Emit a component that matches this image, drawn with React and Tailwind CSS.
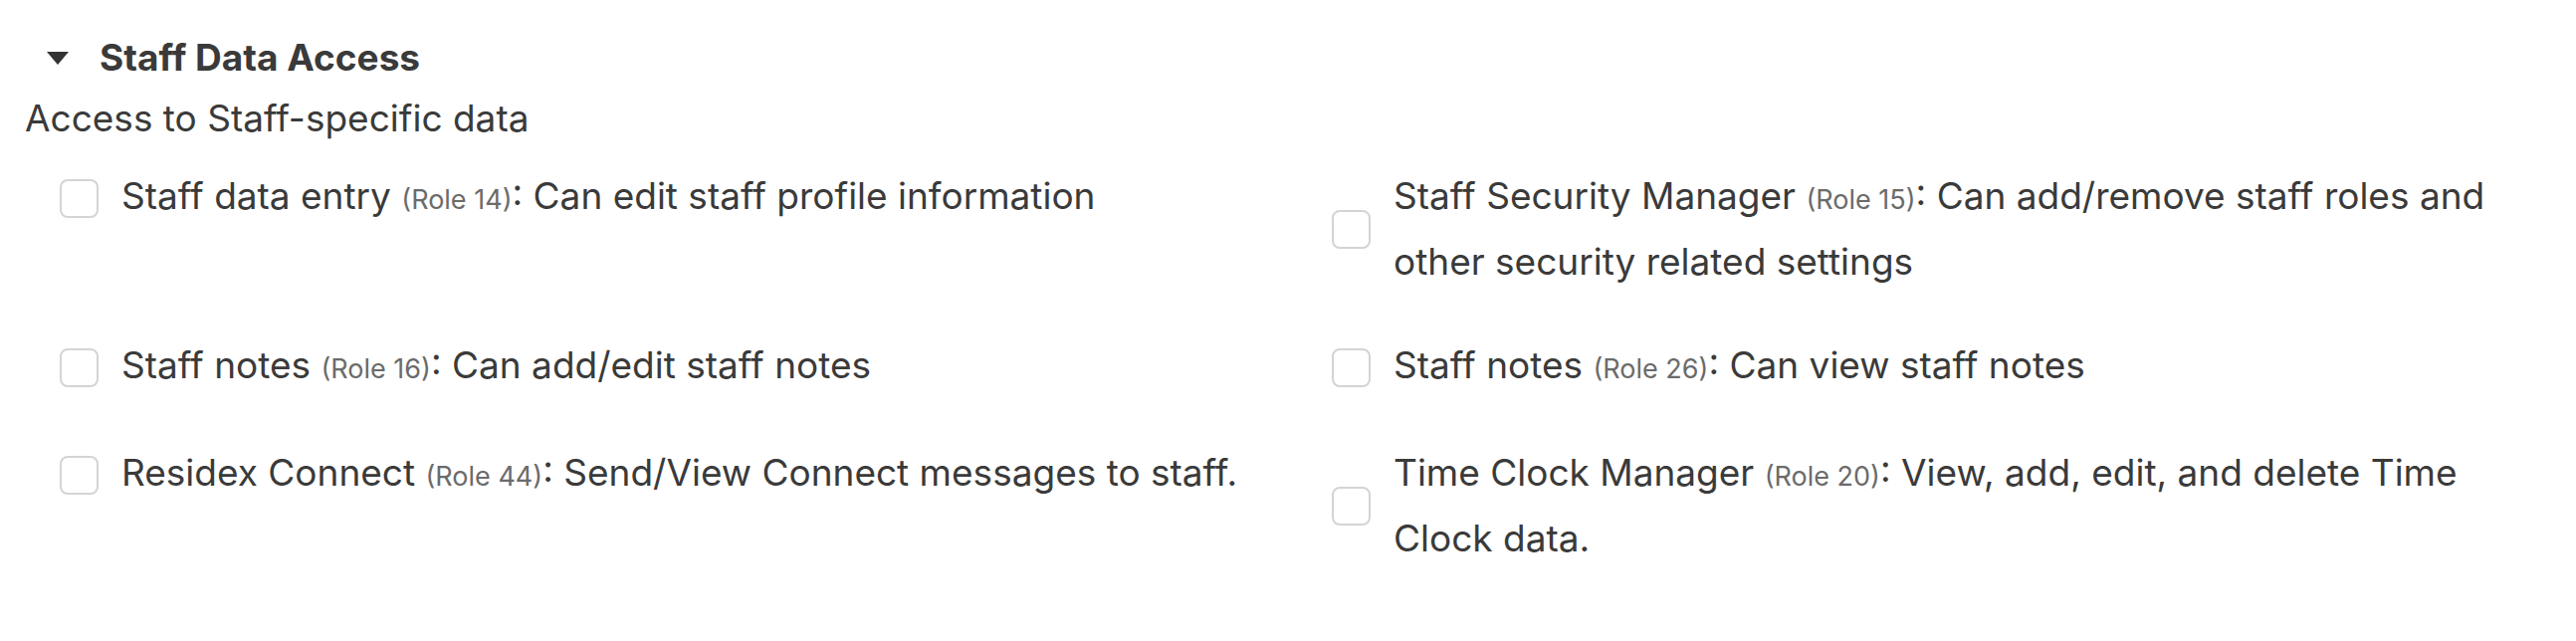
import React from "react";

const roles = [
  { name: "Staff data entry", role: 14, desc: "Can edit staff profile information" },
  { name: "Staff Security Manager", role: 15, desc: "Can add/remove staff roles and other security related settings" },
  { name: "Staff notes", role: 16, desc: "Can add/edit staff notes" },
  { name: "Staff notes", role: 26, desc: "Can view staff notes" },
  { name: "Residex Connect", role: 44, desc: "Send/View Connect messages to staff." },
  { name: "Time Clock Manager", role: 20, desc: "View, add, edit, and delete Time Clock data." },
];

const RoleItem = ({ item }) => (
  <label className="flex items-center gap-[23px] cursor-pointer">
    <span className="w-[39px] h-[39px] shrink-0 rounded-[8px] border-2 border-[#d4d4d4] bg-white" />
    <span className="text-[37px] leading-[62px] text-[#3a3a3a]">
      {item.name}{" "}
      <span className="text-[27px] text-[#6b6b6b]">(Role {item.role})</span>: {item.desc}
    </span>
  </label>
);

const App = () => {
  return (
    <div
      className="min-h-screen bg-white px-[25px] pt-[28px]"
      style={{ fontFamily: "Inter, 'Noto Sans', sans-serif" }}
    >
      <div className="flex items-center h-[60px]">
        <span className="ml-[22px] w-0 h-0 border-l-[11px] border-r-[11px] border-t-[13px] border-l-transparent border-r-transparent border-t-[#333333]" />
        <h2 className="ml-[31px] text-[37px] font-bold text-[#3a3a3a]">Staff Data Access</h2>
      </div>
      <p className="text-[37px] leading-[62px] text-[#3a3a3a]">Access to Staff-specific data</p>

      <div className="grid grid-cols-2 items-start gap-x-[53px] gap-y-[42px] pl-[35px] mt-[16px]">
        {roles.map((item, i) => (
          <RoleItem key={i} item={item} />
        ))}
      </div>
    </div>
  );
};

export default App;
